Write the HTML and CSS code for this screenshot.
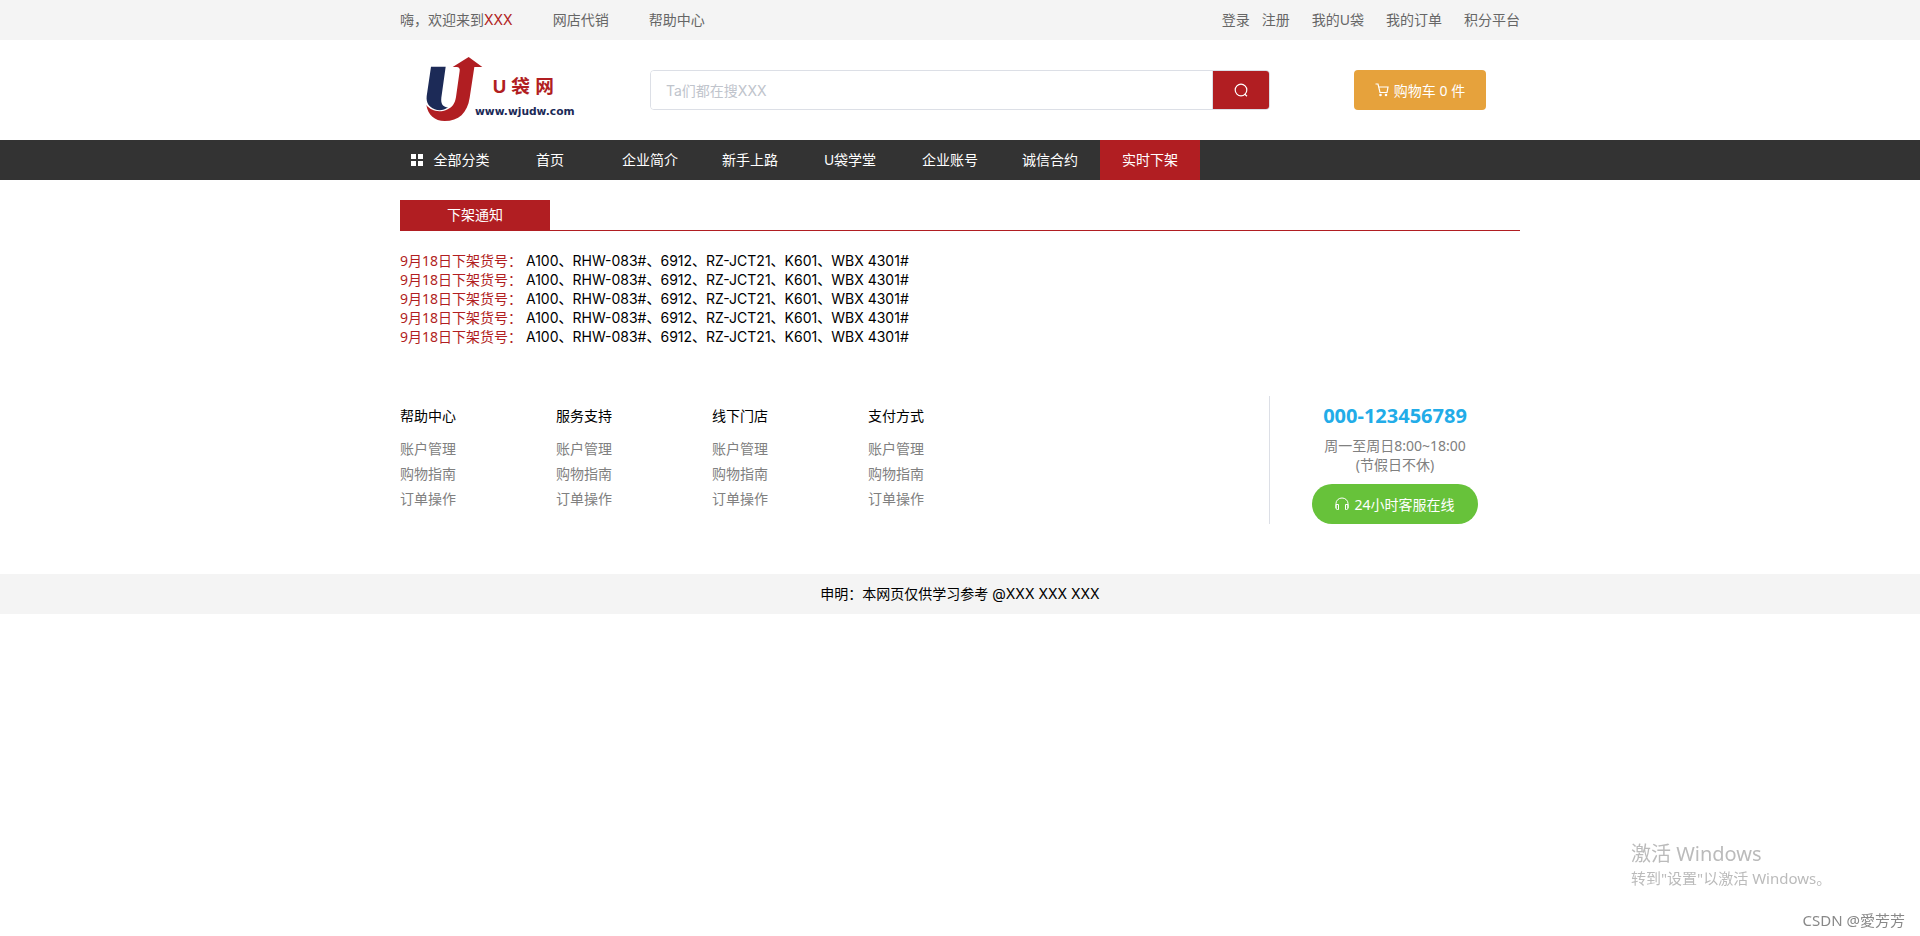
FILE: index.html
```html
<!DOCTYPE html>
<html lang="zh-CN">
<head>
<meta charset="utf-8">
<meta name="viewport" content="width=device-width, initial-scale=1">
<title>U袋网 - 实时下架</title>
<link rel="stylesheet" href="styles.css">
</head>
<body>
<div class="topbar">
  <div class="container topbar-inner">
    <div class="topbar-left">
      <span>嗨，欢迎来到<a class="brand" href="#">XXX</a></span>
      <a href="#">网店代销</a>
      <a href="#">帮助中心</a>
    </div>
    <div class="topbar-right">
      <span class="account"><a href="#">登录</a><a href="#">注册</a></span>
      <a href="#">我的U袋</a>
      <a href="#">我的订单</a>
      <a href="#">积分平台</a>
    </div>
  </div>
</div>

<header class="container header">
  <a class="logo" href="#" aria-label="U袋网">
    <svg width="180" height="90" viewBox="0 0 540 270">
      <path fill="#1c2a57" d="M63 65H107L94 158C92 176 98 186 114 187C102 197 86 198 74 193C56 186 48 172 50 154Z"/>
      <path fill="#b11e22" d="M176 36L217 66H193L179 158C172 204 146 228 104 228C74 228 54 210 49 180C62 197 87 204 110 194C127 187 135 176 138 156L149 78Q151 67 140 66H128Z"/>
      <text class="logo-name" x="248" y="144">U 袋 网</text>
      <text class="logo-url" x="195" y="209">www.wjudw.com</text>
    </svg>
  </a>
  <form class="search" role="search">
    <input type="text" placeholder="Ta们都在搜XXX" aria-label="搜索商品">
    <button type="button" aria-label="搜索">
      <svg width="14" height="14" viewBox="0 0 14 14" fill="none" stroke="currentColor" stroke-width="1.200"><circle cx="7" cy="7" r="5.800"/><path d="M10.600 11L13 13.200"/></svg>
    </button>
  </form>
  <button class="cart" type="button">
    <svg width="14" height="14" viewBox="0 0 14 14" fill="none" stroke="currentColor" stroke-width="1.200"><path d="M.5 1H3L5 9.500H12L13 4H3.800"/><circle cx="5.500" cy="12" r=".7"/><circle cx="11" cy="12" r=".7"/></svg>
    <span>购物车 0 件</span>
  </button>
</header>

<nav class="nav">
  <div class="container nav-inner">
    <a class="all" href="#">
      <svg width="12" height="12" viewBox="0 0 12 12" fill="currentColor"><path d="M0 0H5V5H0ZM7 0H12V5H7ZM0 7H5V12H0ZM7 7H12V12H7Z"/></svg>
      <span>全部分类</span>
    </a>
    <a href="#">首页</a>
    <a href="#">企业简介</a>
    <a href="#">新手上路</a>
    <a href="#">U袋学堂</a>
    <a href="#">企业账号</a>
    <a href="#">诚信合约</a>
    <a class="active" href="#" aria-current="page">实时下架</a>
  </div>
</nav>

<main class="container">
  <div class="section-head"><h1>下架通知</h1></div>
  <ul class="notices">
    <li><span>9月18日下架货号：</span> A100、RHW-083#、6912、RZ-JCT21、K601、WBX 4301#</li>
    <li><span>9月18日下架货号：</span> A100、RHW-083#、6912、RZ-JCT21、K601、WBX 4301#</li>
    <li><span>9月18日下架货号：</span> A100、RHW-083#、6912、RZ-JCT21、K601、WBX 4301#</li>
    <li><span>9月18日下架货号：</span> A100、RHW-083#、6912、RZ-JCT21、K601、WBX 4301#</li>
    <li><span>9月18日下架货号：</span> A100、RHW-083#、6912、RZ-JCT21、K601、WBX 4301#</li>
  </ul>
</main>

<footer>
  <div class="container help">
    <div class="help-columns">
      <section><h2>帮助中心</h2><a href="#">账户管理</a><a href="#">购物指南</a><a href="#">订单操作</a></section>
      <section><h2>服务支持</h2><a href="#">账户管理</a><a href="#">购物指南</a><a href="#">订单操作</a></section>
      <section><h2>线下门店</h2><a href="#">账户管理</a><a href="#">购物指南</a><a href="#">订单操作</a></section>
      <section><h2>支付方式</h2><a href="#">账户管理</a><a href="#">购物指南</a><a href="#">订单操作</a></section>
    </div>
    <div class="contact">
      <strong>000-123456789</strong>
      <p>周一至周日8:00~18:00<br>(节假日不休)</p>
      <button class="service" type="button">
        <svg width="14" height="14" viewBox="0 0 14 14" fill="none" stroke="currentColor"><path d="M1 11V6.500A6 5.500 0 0 1 13 6.500V11"/><path d="M1 7.500H3.500V12.500H2.500Q1 12.500 1 11ZM13 7.500H10.500V12.500H11.500Q13 12.500 13 11Z"/></svg>
        <span>24小时客服在线</span>
      </button>
    </div>
  </div>
  <p class="statement">申明：本网页仅供学习参考 @XXX XXX XXX</p>
</footer>

<aside class="activate">
  <div class="activate-title">激活 Windows</div>
  <div>转到"设置"以激活 Windows。</div>
</aside>
<div class="credit">CSDN @愛芳芳</div>
</body>
</html>
```

FILE: styles.css
```css
* {
  box-sizing: border-box;
}

body {
  margin: 0;
  background: #fff;
  color: #000;
  font: 14px/19px "Noto Sans", "Noto Sans CJK SC", sans-serif;
}

a {
  color: inherit;
  text-decoration: none;
}

button {
  border: 0;
  color: #fff;
  font: inherit;
  cursor: pointer;
}

.container {
  max-width: 1120px;
  margin: 0 auto;
}

.topbar {
  background: #f4f4f4;
  color: #666;
  line-height: 40px;
}

.topbar-inner,
.topbar-left,
.topbar-right,
.account {
  display: flex;
}

.topbar-inner {
  justify-content: space-between;
}

.topbar-left {
  gap: 40px;
}

.topbar-right {
  gap: 22px;
}

.account {
  gap: 12px;
}

.brand,
.notices,
.statement,
.search input {
  font-family: Inter, "Noto Sans CJK SC", sans-serif;
}

.brand {
  color: #b11e22;
}

.header {
  display: flex;
  align-items: center;
  height: 100px;
  padding: 0 34px 0 10px;
}

.logo {
  display: block;
  height: 90px;
}

.logo-name {
  fill: #b11e22;
  font: bold 56px "Liberation Sans", "Noto Sans CJK SC", sans-serif;
}

.logo-url {
  fill: #1c2a57;
  font: bold 32px "DejaVu Sans", sans-serif;
}

.search {
  display: flex;
  flex: 1;
  height: 40px;
  margin: 0 84px 0 60px;
  border: 1px solid #dcdfe6;
  border-radius: 4px;
  overflow: hidden;
}

.search input {
  flex: 1;
  min-width: 0;
  padding: 0 15px;
  border: 0;
  border-right: 1px solid #dcdfe6;
  outline: 0;
  font-size: 14px;
}

.search input::placeholder {
  color: #c0c4cc;
}

.search button {
  display: grid;
  place-items: center;
  width: 56px;
  padding: 0;
  background: #b11e22;
}

.cart,
.service {
  display: flex;
  align-items: center;
  justify-content: center;
  gap: 5px;
  height: 40px;
}

.cart {
  width: 132px;
  padding: 0;
  border-radius: 4px;
  background: #e6a23c;
}

.nav {
  background: #333;
  color: #fff;
}

.nav-inner {
  display: flex;
}

.nav a {
  width: 100px;
  line-height: 40px;
  text-align: center;
}

.nav .all {
  display: flex;
  align-items: center;
  justify-content: center;
  gap: 11px;
}

.nav .active {
  background: #b11e22;
}

.section-head {
  margin-top: 20px;
  border-bottom: 1px solid #b11e22;
}

.section-head h1 {
  width: 150px;
  margin: 0;
  background: #b11e22;
  color: #fff;
  font-size: 14px;
  font-weight: 400;
  line-height: 30px;
  text-align: center;
}

.notices {
  margin: 20px 0 50px;
  padding: 0;
  list-style: none;
}

.notices span {
  color: #b11e22;
  font-family: "Noto Sans", "Noto Sans CJK SC", sans-serif;
}

.help {
  display: flex;
  justify-content: space-between;
  margin-bottom: 50px;
}

.help-columns {
  display: flex;
  gap: 100px;
  padding-top: 10px;
}

.help section {
  display: flex;
  flex-direction: column;
  gap: 6px;
  color: #808080;
}

.help h2 {
  margin: 0 0 8px;
  color: #000;
  font-size: 14px;
  font-weight: 400;
}

.contact {
  display: flex;
  flex-direction: column;
  align-items: center;
  width: 251px;
  border-left: 1px solid #dcdfe6;
  color: #808080;
}

.contact strong {
  color: #22ace8;
  font-size: 20px;
  line-height: 40px;
}

.contact p {
  margin: 0 0 10px;
  text-align: center;
}

.service {
  width: 166px;
  border-radius: 20px;
  background: #67c23a;
}

.statement {
  margin: 0;
  background: #f4f4f4;
  line-height: 40px;
  text-align: center;
}

.activate,
.credit {
  position: fixed;
  pointer-events: none;
}

.activate {
  right: 89px;
  bottom: 46px;
  width: 200px;
  color: #bbb;
  font-size: 15px;
  line-height: 24px;
  white-space: nowrap;
}

.activate-title {
  font-size: 20px;
}

.credit {
  right: 15px;
  bottom: 5px;
  color: #888;
  font-size: 15px;
  line-height: 22px;
}
```
